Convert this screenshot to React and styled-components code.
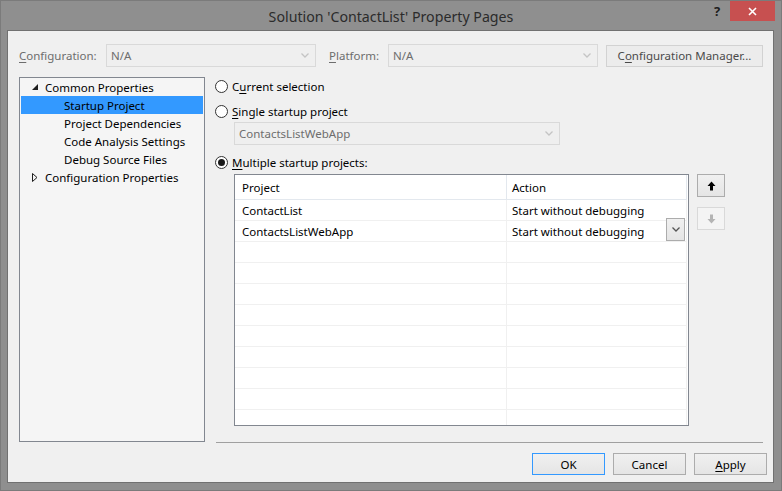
import React from 'react';
import styled, { createGlobalStyle } from 'styled-components';

const GlobalStyle = createGlobalStyle`
    body {
        margin: 0;
        background: #ffffff;
        font-family: "Noto Sans", "Liberation Sans", sans-serif;
        font-size: 11.5px;
        color: #000;
    }
`

const Window = styled.div`
    width: 782px;
    height: 491px;
    box-sizing: border-box;
    background: #8f8f8f;
    border: 1px solid #7b7b7b;
    display: flex;
    flex-direction: column;
`

const TitleBar = styled.div`
    height: 29px;
    display: grid;
    grid-template-columns: 1fr auto 1fr;
    align-items: center;
`

const Title = styled.div`
    grid-column: 2;
    font-size: 14.2px;
    color: #2b2b2b;
    margin-top: 1px;
`

const Caption = styled.div`
    grid-column: 3;
    justify-self: end;
    align-self: start;
    display: flex;
    margin-right: 6px;
`

const HelpButton = styled.div`
    width: 26px;
    height: 20px;
    display: flex;
    align-items: center;
    justify-content: center;
    font-weight: 700;
    font-size: 13px;
    color: #1e1e1e;
`

const CloseButton = styled.div`
    width: 45px;
    height: 20px;
    background: #c75050;
    display: flex;
    align-items: center;
    justify-content: center;
`

const Client = styled.div`
    flex: 1;
    margin: 0 7px 7px 6px;
    border: 1px solid #717171;
    background: #f0f0f0;
    padding: 13px 10px 7px 11px;
    display: flex;
    flex-direction: column;
`

const TopRow = styled.div`
    display: flex;
    align-items: center;
    height: 23px;
`

const Label = styled.span`
    width: ${({width}) => width}px;
    color: #6d6d6d;
    flex-shrink: 0;
`

const U = styled.span`
    text-decoration: underline;
    text-underline-offset: 2px;
`

const Combo = styled.div`
    width: ${({width}) => width}px;
    height: 23px;
    box-sizing: border-box;
    border: 1px solid #d9d9d9;
    background: #efefef;
    color: #6d6d6d;
    display: flex;
    align-items: center;
    justify-content: space-between;
    padding: 0 6px 0 4px;
    margin-right: ${({mr}) => mr || 0}px;
    margin-left: ${({ml}) => ml || 0}px;
    margin-top: ${({mt}) => mt || 0}px;
    flex-shrink: 0;
`

const Button = styled.div`
    width: ${({width}) => width || 73}px;
    height: 22px;
    box-sizing: border-box;
    border: 1px solid ${({focus, muted}) => (focus ? '#3399ff' : muted ? '#d2d2d2' : '#acacac')};
    background: ${({muted}) => (muted ? '#ececec' : 'linear-gradient(#f0f0f0, #e5e5e5)')};
    display: flex;
    align-items: center;
    justify-content: center;
    color: ${({muted}) => (muted ? '#4a4a4a' : '#000')};
    margin-left: ${({ml}) => ml || 0}px;
    flex-shrink: 0;
`

const Body = styled.div`
    display: flex;
    margin-top: 10px;
    height: 365px;
`

const Tree = styled.div`
    width: 186px;
    box-sizing: border-box;
    border: 1px solid #828790;
    background: #f5f5f5;
    padding: 0 1px 1px;
    flex-shrink: 0;
`

const TreeItem = styled.div`
    height: 18px;
    display: flex;
    align-items: center;
    padding-left: ${({level}) => (level ? 43 : 11)}px;
    background: ${({selected}) => (selected ? '#3399ff' : 'transparent')};
    color: #000;
`

const Expander = styled.span`
    width: 13px;
    display: flex;
    align-items: center;
`

const RightColumn = styled.div`
    flex: 1;
    margin-left: 11px;
    display: flex;
    flex-direction: column;
`

const RadioRow = styled.div`
    height: 18px;
    display: flex;
    align-items: center;
    margin-top: ${({mt}) => mt || 0}px;
    margin-left: -1px;
`

const RadioCircle = styled.span`
    width: 13px;
    height: 13px;
    box-sizing: border-box;
    border-radius: 50%;
    border: 1px solid #333;
    background: #fff;
    margin-right: 4px;
    display: flex;
    align-items: center;
    justify-content: center;

    &::after {
        content: '';
        width: 7px;
        height: 7px;
        border-radius: 50%;
        background: ${({checked}) => (checked ? '#1a1a1a' : 'transparent')};
    }
`

const GridArea = styled.div`
    display: flex;
    margin-top: 3px;
    margin-left: 18px;
`

const Grid = styled.div`
    width: 455px;
    height: 252px;
    box-sizing: border-box;
    border: 1px solid #828790;
    background: #fff;
    overflow: hidden;
`

const Row = styled.div`
    display: grid;
    grid-template-columns: 272px 180px;
    height: ${({header}) => (header ? 25 : 21)}px;
`

const Cell = styled.div`
    box-sizing: border-box;
    border-right: 1px solid ${({header}) => (header ? '#e3e8ee' : '#f0f0f0')};
    border-bottom: 1px solid ${({header}) => (header ? '#e3e8ee' : '#f0f0f0')};
    display: flex;
    align-items: center;
    padding-left: ${({first}) => (first ? 7 : 5)}px;
    white-space: nowrap;
`

const CellDrop = styled.div`
    margin-left: auto;
    margin-right: 1px;
    align-self: flex-start;
    margin-top: -3px;
    width: 19px;
    height: 23px;
    box-sizing: border-box;
    border: 1px solid #acacac;
    background: linear-gradient(#f0f0f0, #e5e5e5);
    display: flex;
    align-items: center;
    justify-content: center;
`

const SideButtons = styled.div`
    display: flex;
    flex-direction: column;
    gap: 10px;
    margin-left: 8px;
`

const ArrowButton = styled.div`
    width: 28px;
    height: 23px;
    box-sizing: border-box;
    border: 1px solid ${({disabled}) => (disabled ? '#d9d9d9' : '#acacac')};
    background: ${({disabled}) => (disabled ? '#f4f4f4' : 'linear-gradient(#f0f0f0, #e5e5e5)')};
    display: flex;
    align-items: center;
    justify-content: center;
`

const Separator = styled.div`
    margin-top: auto;
    margin-bottom: -1px;
    border-top: 1px solid #a0a0a0;
`

const Footer = styled.div`
    display: flex;
    justify-content: flex-end;
    margin-top: 11px;
    margin-right: -4px;
`

const Chevron = ({color = '#9a9a9a'}) => (
    <svg width="8" height="5" viewBox="0 0 8 5">
        <path d="M0.5 0.5 L4 4 L7.5 0.5" fill="none" stroke={color} strokeWidth="1.3" />
    </svg>
)

const Arrow = ({down, color}) => (
    <svg width="9" height="10" viewBox="0 0 9 10" style={down ? {transform: 'rotate(180deg)'} : undefined}>
        <path d="M4.5 0.5 L8.5 5 H6 V9.5 H3 V5 H0.5 Z" fill={color} />
    </svg>
)

const treeItems = [
    {text: 'Common Properties', expander: 'open'},
    {text: 'Startup Project', level: 1, selected: true},
    {text: 'Project Dependencies', level: 1},
    {text: 'Code Analysis Settings', level: 1},
    {text: 'Debug Source Files', level: 1},
    {text: 'Configuration Properties', expander: 'closed'},
]

const rows = [
    ['ContactList', 'Start without debugging'],
    ['ContactsListWebApp', 'Start without debugging', true],
    ...Array.from({length: 9}, () => ['', '']),
]

const App = () => {
    return (
        <>
        <GlobalStyle />
        <Window>
            <TitleBar>
                <Title>Solution 'ContactList' Property Pages</Title>
                <Caption>
                    <HelpButton>?</HelpButton>
                    <CloseButton>
                        <svg width="9" height="9" viewBox="0 0 9 9">
                            <path d="M1 1 L8 8 M8 1 L1 8" stroke="#fff" strokeWidth="1.6" />
                        </svg>
                    </CloseButton>
                </Caption>
            </TitleBar>

            <Client>
                <TopRow>
                    <Label width={87}><U>C</U>onfiguration:</Label>
                    <Combo width={210} mr={13}>N/A<Chevron color="#c4c4c4" /></Combo>
                    <Label width={59}><U>P</U>latform:</Label>
                    <Combo width={210}>N/A<Chevron color="#c4c4c4" /></Combo>
                    <Button width={157} ml={8} muted>C<U>o</U>nfiguration Manager...</Button>
                </TopRow>

                <Body>
                    <Tree>
                        {treeItems.map((item) => (
                            <TreeItem key={item.text} level={item.level} selected={item.selected}>
                                {item.expander && (
                                    <Expander>
                                        {item.expander === 'open' ? (
                                            <svg width="6" height="6" viewBox="0 0 6 6">
                                                <path d="M6 0 L6 6 L0 6 Z" fill="#1e1e1e" />
                                            </svg>
                                        ) : (
                                            <svg width="6" height="9" viewBox="0 0 6 9">
                                                <path d="M0.5 0.5 L5 4.5 L0.5 8.5 Z" fill="none" stroke="#1e1e1e" strokeWidth="1" />
                                            </svg>
                                        )}
                                    </Expander>
                                )}
                                {item.text}
                            </TreeItem>
                        ))}
                    </Tree>

                    <RightColumn>
                        <RadioRow>
                            <RadioCircle />
                            <span>C<U>u</U>rrent selection</span>
                        </RadioRow>
                        <RadioRow mt={7}>
                            <RadioCircle />
                            <span><U>S</U>ingle startup project</span>
                        </RadioRow>
                        <Combo width={326} ml={18} mt={2}>
                            ContactsListWebApp<Chevron color="#c4c4c4" />
                        </Combo>
                        <RadioRow mt={8}>
                            <RadioCircle checked />
                            <span><U>M</U>ultiple startup projects:</span>
                        </RadioRow>

                        <GridArea>
                            <Grid>
                                <Row header>
                                    <Cell header first>Project</Cell>
                                    <Cell header>Action</Cell>
                                </Row>
                                {rows.map(([project, action, editing], i) => (
                                    <Row key={i}>
                                        <Cell first>{project}</Cell>
                                        <Cell>
                                            {action}
                                            {editing && <CellDrop><Chevron color="#555" /></CellDrop>}
                                        </Cell>
                                    </Row>
                                ))}
                            </Grid>
                            <SideButtons>
                                <ArrowButton><Arrow color="#000" /></ArrowButton>
                                <ArrowButton disabled><Arrow down color="#b4b4b4" /></ArrowButton>
                            </SideButtons>
                        </GridArea>

                        <Separator />
                    </RightColumn>
                </Body>

                <Footer>
                    <Button focus>OK</Button>
                    <Button ml={8}>Cancel</Button>
                    <Button ml={8}><U>A</U>pply</Button>
                </Footer>
            </Client>
        </Window>
        </>
    )
}

export default App
